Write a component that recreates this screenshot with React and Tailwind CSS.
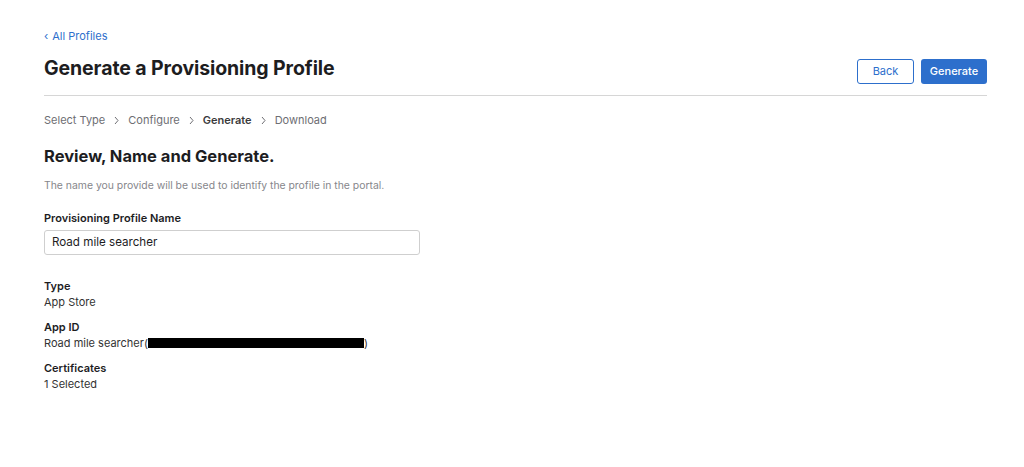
import React from "react";

const Crumb = ({ children, active }) => (
  <span className={active ? "font-semibold text-[#3a3a3c]" : "text-[#6e6e73]"}>{children}</span>
);

const Sep = () => (
  <svg width="5" height="9" viewBox="0 0 5 9" className="mx-[9px]">
    <path d="M1 1l3 3.5L1 8" fill="none" stroke="#6e6e73" strokeWidth="1" />
  </svg>
);

const Field = ({ label, children }) => (
  <div className="mb-[9px]">
    <div className="text-[11px] leading-[16px] font-semibold text-[#1d1d1f]">{label}</div>
    <div className="text-[11px] leading-[16px] text-[#333]">{children}</div>
  </div>
);

export default function App() {
  return (
    <div
      className="w-[1024px] h-[467px] bg-white pl-[44px] pr-[37px] pt-[29px]"
      style={{ fontFamily: "Inter, 'Noto Sans', sans-serif" }}
    >
      {/* back link */}
      <a className="flex items-center text-[11px] leading-[14px] text-[#2d6fcc]">
        <span className="mr-[4px]">‹</span>All Profiles
      </a>

      {/* header */}
      <div className="flex items-end justify-between mt-[9px] pb-[11px] border-b border-[#d6d6d6]">
        <h1 className="text-[19.5px] leading-[32px] font-bold text-[#1d1d1f] tracking-[-0.1px]">
          Generate a Provisioning Profile
        </h1>
        <div className="flex gap-[7px]">
          <button className="w-[57px] h-[25px] rounded-[3px] border border-[#2d6fcc] text-[11px] text-[#2d6fcc] bg-white">
            Back
          </button>
          <button className="w-[66px] h-[25px] rounded-[3px] bg-[#2d6fcc] text-[11px] text-white font-medium">
            Generate
          </button>
        </div>
      </div>

      {/* steps */}
      <div className="flex items-center mt-[17px] text-[11px] leading-[14px]">
        <Crumb>Select Type</Crumb>
        <Sep />
        <Crumb>Configure</Crumb>
        <Sep />
        <Crumb active>Generate</Crumb>
        <Sep />
        <Crumb>Download</Crumb>
      </div>

      <h2 className="mt-[18px] text-[16.5px] leading-[22px] font-bold text-[#1d1d1f]">
        Review, Name and Generate.
      </h2>
      <p className="mt-[12px] text-[10.4px] leading-[14px] text-[#86868b]">
        The name you provide will be used to identify the profile in the portal.
      </p>

      <div className="mt-[18px] text-[11px] leading-[14px] font-semibold text-[#1d1d1f]">
        Provisioning Profile Name
      </div>
      <div className="mt-[5px] w-[376px] h-[25px] border border-[#cfcfcf] rounded-[3px] flex items-center px-[7px] text-[11.6px] text-[#1d1d1f]">
        Road mile searcher
      </div>

      <div className="mt-[23px]">
        <Field label="Type">App Store</Field>
        <Field label="App ID">
          <span className="inline-flex items-center">
            Road mile searcher(
            <span className="inline-block w-[216px] h-[10px] bg-black" />
            )
          </span>
        </Field>
        <Field label="Certificates">1 Selected</Field>
      </div>
    </div>
  );
}
